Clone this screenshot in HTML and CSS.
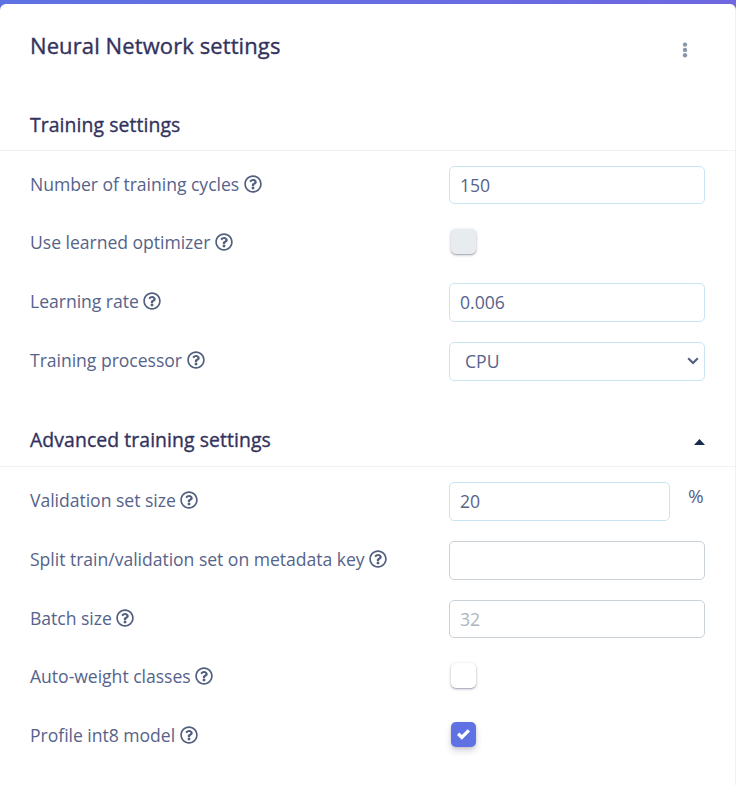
FILE: index.html
```html
<!DOCTYPE html>
<html lang="en">
<head>
<meta charset="utf-8">
<title>Neural Network settings</title>
<link rel="stylesheet" href="styles.css">
</head>
<body>
<svg class="defs" width="0" height="0" aria-hidden="true">
  <symbol id="help" viewBox="0 0 512 512"><path d="M256 8C119.043 8 8 119.083 8 256c0 136.997 111.043 248 248 248s248-111.003 248-248C504 119.083 392.957 8 256 8zm0 448c-110.532 0-200-89.431-200-200 0-110.495 89.472-200 200-200 110.491 0 200 89.471 200 200 0 110.53-89.431 200-200 200zm107.244-255.2c0 67.052-72.421 68.084-72.421 92.863V300c0 6.627-5.373 12-12 12h-45.647c-6.627 0-12-5.373-12-12v-8.659c0-35.745 27.1-50.034 47.579-61.516 17.561-9.845 28.324-16.541 28.324-29.579 0-17.246-21.999-28.693-39.784-28.693-23.189 0-33.894 10.977-48.942 29.969-4.057 5.12-11.46 6.071-16.666 2.124l-27.824-21.098c-5.107-3.872-6.251-11.066-2.644-16.363C184.846 131.491 214.94 112 261.794 112c49.071 0 101.45 38.304 101.45 88.8zM298 368c0 23.159-18.841 42-42 42s-42-18.841-42-42 18.841-42 42-42 42 18.841 42 42z"/></symbol>
</svg>
<main class="card">
  <header class="card-header">
    <h1>Neural Network settings</h1>
    <svg class="menu" viewBox="0 0 6 16"><circle cx="3" cy="2.6" r="2.2"/><circle cx="3" cy="7.9" r="2.2"/><circle cx="3" cy="13.2" r="2.2"/></svg>
  </header>
  <section>
    <div class="section-head training"><h2>Training settings</h2></div>
    <div class="rows">
      <div class="row"><label>Number of training cycles<svg class="help"><use href="#help"/></svg></label><div class="control"><input class="field" type="text" value="150"></div></div>
      <div class="row"><label>Use learned optimizer<svg class="help"><use href="#help"/></svg></label><div class="control"><span class="check disabled"></span></div></div>
      <div class="row"><label>Learning rate<svg class="help"><use href="#help"/></svg></label><div class="control"><input class="field" type="text" value="0.006"></div></div>
      <div class="row"><label>Training processor<svg class="help"><use href="#help"/></svg></label><div class="control"><div class="field select"><span>CPU</span><svg class="chevron" viewBox="0 0 12 8"><path d="M1.2 1.2 6 6l4.8-4.8"/></svg></div></div></div>
    </div>
  </section>
  <section>
    <div class="section-head advanced"><h2>Advanced training settings</h2><svg class="caret" viewBox="0 0 11 6"><path d="M0 6 5.5 0 11 6z"/></svg></div>
    <div class="rows">
      <div class="row"><label>Validation set size<svg class="help"><use href="#help"/></svg></label><div class="control"><input class="field" type="text" value="20"><span class="unit">%</span></div></div>
      <div class="row"><label>Split train/validation set on metadata key<svg class="help"><use href="#help"/></svg></label><div class="control"><input class="field plain" type="text"></div></div>
      <div class="row"><label>Batch size<svg class="help"><use href="#help"/></svg></label><div class="control"><input class="field plain" type="text" placeholder="32"></div></div>
      <div class="row"><label>Auto-weight classes<svg class="help"><use href="#help"/></svg></label><div class="control"><span class="check"></span></div></div>
      <div class="row"><label>Profile int8 model<svg class="help"><use href="#help"/></svg></label><div class="control"><span class="check checked"><svg viewBox="0 0 8 8"><path d="M6.564.75l-3.59 3.612-1.538-1.55L0 4.26 2.974 7.25 8 2.193z"/></svg></span></div></div>
    </div>
  </section>
</main>
</body>
</html>
```
FILE: styles.css
```css
* { box-sizing: border-box; }
body {
  margin: 0;
  padding-top: 4px;
  height: 785px;
  overflow: hidden;
  background: linear-gradient(90deg, #5e72e4, #6f68e0) top / 100% 20px no-repeat #fff;
  font-family: "Open Sans", sans-serif;
  font-size: 17.6px;
  font-weight: 400;
  color: #56638a;
}
.defs { position: absolute; }
.card {
  height: 781px;
  background: #fff;
  border-right: 1px solid #f0f0f2;
  border-radius: 6px 6px 0 0;
}
h1, h2 { margin: 0; color: #32325d; font-weight: 400; -webkit-text-stroke: .35px #32325d; }
h1 { font-size: 22px; line-height: 30px; letter-spacing: .1px; }
h2 { font-size: 19.4px; line-height: 28px; letter-spacing: .08px; }
.card-header {
  display: flex;
  justify-content: space-between;
  height: 97px;
  padding: 26px 47.3px 0 30px;
}
.menu { width: 6px; height: 16px; margin-top: 12.3px; fill: #8898aa; }
.section-head {
  display: flex;
  justify-content: space-between;
  padding: 10px 30px 0;
  border-bottom: 1px solid #f0f1f3;
}
.training { height: 50px; }
.advanced { height: 66px; padding-top: 25px; }
.caret { width: 11px; height: 6px; margin-top: 12.5px; fill: #172b4d; }
.rows { padding: 15px 30px 0; }
.training + .rows { height: 250px; }
.advanced + .rows { padding-top: 15.4px; }
.row { display: flex; justify-content: space-between; height: 58.7px; }
label { display: flex; height: 35.5px; align-items: center; white-space: nowrap; letter-spacing: -.035px; }
.help { width: 18px; height: 18px; margin-left: 4.5px; fill: #525f7f; }
.control { display: flex; justify-content: space-between; align-items: flex-start; width: 256px; }
.field {
  display: flex;
  align-items: center;
  flex: 1;
  min-width: 0;
  height: 38.45px;
  padding: 0 10px .6px;
  border: 1px solid #c9e5f5;
  border-radius: 5px;
  background: #fff;
  color: #56638a;
  font: inherit;
  outline: 0;
}
.plain { border-color: #cad1d7; }
.field::placeholder { color: #adb5bd; opacity: 1; }
.select { justify-content: space-between; padding: 0 5px 0 15px; }
.chevron { width: 12px; height: 8px; fill: none; stroke: #525f7f; stroke-width: 2.1; }
.unit { width: 17px; margin-left: 18px; font-size: 19px; line-height: 29px; }
.check {
  display: grid;
  place-items: center;
  width: 25px;
  height: 25px;
  margin: 4.7px 0 0 2px;
  border-radius: 5px;
  background: #fff;
  box-shadow: 0 1px 3px rgba(50, 50, 93, .35), 0 1px 1px rgba(50, 50, 93, .2);
}
.disabled { margin-top: 4.3px; background: #e9ecef; }
.checked { background: #5e72e4; box-shadow: 0 4px 6px rgba(50, 50, 93, .2), 0 1px 3px rgba(0, 0, 0, .12); }
.check svg { width: 13px; height: 13px; fill: #fff; }
```
